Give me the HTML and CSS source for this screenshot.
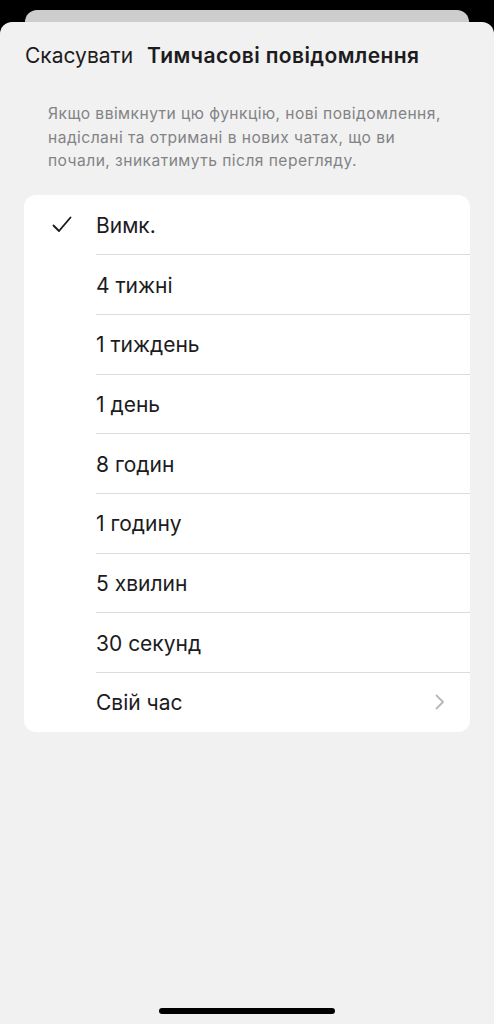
FILE: index.html
```html
<!DOCTYPE html>
<html lang="uk">
<head>
<meta charset="utf-8">
<link rel="stylesheet" href="styles.css">
</head>
<body>
<div class="screen">
  <div class="back-card"></div>
  <div class="sheet">
    <div class="header">
      <span class="cancel">Скасувати</span>
      <span class="title">Тимчасові повідомлення</span>
    </div>
    <p class="desc">Якщо ввімкнути цю функцію, нові повідомлення, надіслані та отримані в нових чатах, що ви почали, зникатимуть після перегляду.</p>
    <div class="list">
      <div class="row">
        <span class="check"><svg width="20" height="17" viewBox="0 0 20 17"><path d="M1.5 9.5 L7 15 L18.5 1.5" fill="none" stroke="#1c1c1e" stroke-width="1.9" stroke-linecap="round" stroke-linejoin="round"/></svg></span>
        <span class="label">Вимк.</span>
      </div>
      <div class="row"><span class="check"></span><span class="label">4 тижні</span></div>
      <div class="row"><span class="check"></span><span class="label">1 тиждень</span></div>
      <div class="row"><span class="check"></span><span class="label">1 день</span></div>
      <div class="row"><span class="check"></span><span class="label">8 годин</span></div>
      <div class="row"><span class="check"></span><span class="label">1 годину</span></div>
      <div class="row"><span class="check"></span><span class="label">5 хвилин</span></div>
      <div class="row"><span class="check"></span><span class="label">30 секунд</span></div>
      <div class="row">
        <span class="check"></span>
        <span class="label">Свій час</span>
        <span class="chev"><svg width="10" height="16" viewBox="0 0 10 16"><path d="M1.5 1.5 L8 8 L1.5 14.5" fill="none" stroke="#b8b8bc" stroke-width="1.8" stroke-linecap="round" stroke-linejoin="round"/></svg></span>
      </div>
    </div>
    <div class="spacer"></div>
    <div class="home"></div>
  </div>
</div>
</body>
</html>
```
FILE: styles.css
```css
* { box-sizing: border-box; }
html, body { margin: 0; padding: 0; background: #000; }
body { font-family: Inter, "Noto Sans", sans-serif; color: #1c1c1e; }
.screen {
  width: 494px;
  height: 1024px;
  background: #000;
  position: relative;
  display: flex;
  flex-direction: column;
  overflow: hidden;
}
.back-card {
  position: absolute;
  left: 25px;
  right: 25px;
  top: 10px;
  height: 40px;
  background: #cdcdcd;
  border-radius: 12px;
}
.sheet {
  position: relative;
  margin-top: 22px;
  flex: 1;
  background: #f1f1f1;
  border-radius: 12px 12px 0 0;
  display: flex;
  flex-direction: column;
}
.header {
  display: flex;
  align-items: center;
  height: 66px;
  padding-left: 25px;
  font-size: 21px;
}
.cancel { color: #1c1c1e; margin-right: 14px; }
.title { font-weight: 600; letter-spacing: 0.4px; }
.desc {
  margin: 14px 46px 0 48px;
  font-size: 15.6px;
  letter-spacing: 0.45px;
  line-height: 23.5px;
  color: #838386;
}
.list {
  margin: 22px 24px 0 24px;
  background: #fff;
  border-radius: 12px;
  overflow: hidden;
}
.row {
  display: flex;
  align-items: center;
  height: 59.7px;
  position: relative;
}
.row + .row::before {
  content: "";
  position: absolute;
  left: 72px;
  right: 0;
  top: 0;
  height: 1px;
  background: #dcdcde;
}
.check {
  width: 72px;
  padding-left: 28px;
  display: flex;
  align-items: center;
}
.label { font-size: 21px; flex: 1; padding-top: 2px; }
.chev { padding-right: 25px; display: flex; align-items: center; }
.spacer { flex: 1; }
.home {
  align-self: center;
  width: 176px;
  height: 6px;
  border-radius: 3px;
  background: #000;
  margin-bottom: 10px;
}
```
